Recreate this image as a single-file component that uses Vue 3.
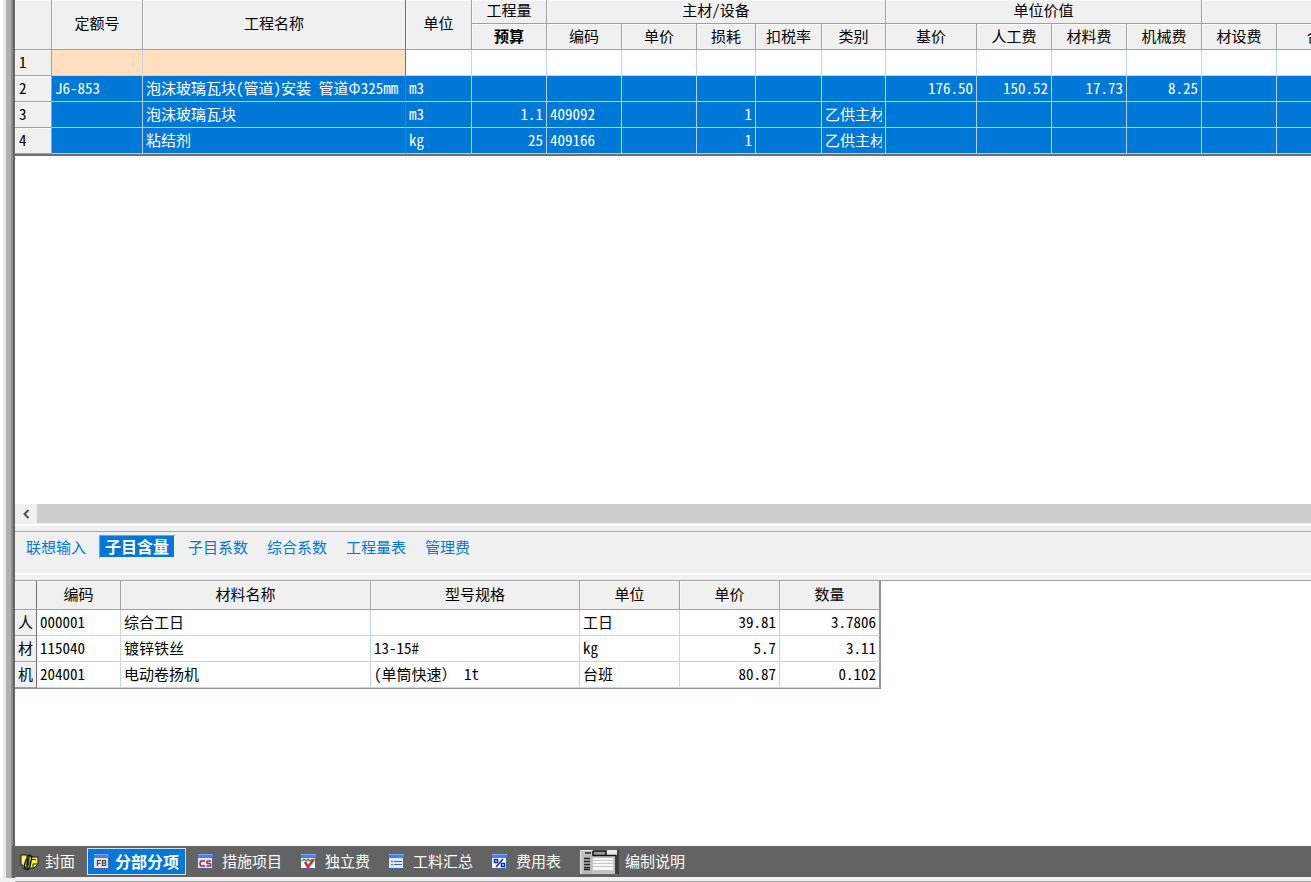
<script setup>
import { ref } from 'vue'

const columns = [
  { key: 'no', width: 37 },
  { key: 'quota', width: 91 },
  { key: 'name', width: 263 },
  { key: 'unit', width: 66 },
  { key: 'budget', width: 75, num: true },
  { key: 'code', width: 75 },
  { key: 'price', width: 75, num: true },
  { key: 'loss', width: 59, num: true },
  { key: 'tax', width: 66, num: true },
  { key: 'kind', width: 64 },
  { key: 'base', width: 91, num: true },
  { key: 'labor', width: 75, num: true },
  { key: 'material', width: 75, num: true },
  { key: 'machine', width: 75, num: true },
  { key: 'equipment', width: 75, num: true },
  { key: 'total', width: 90, num: true },
]
const subHeads = ['编码', '单价', '损耗', '扣税率', '类别', '基价', '人工费', '材料费', '机械费', '材设费', '合价']

const rows = [
  { no: '1' },
  { no: '2', quota: 'J6-853', name: '泡沫玻璃瓦块(管道)安装 管道Φ325mm', unit: 'm3', base: '176.50', labor: '150.52', material: '17.73', machine: '8.25' },
  { no: '3', name: '泡沫玻璃瓦块', unit: 'm3', budget: '1.1', code: '409092', loss: '1', kind: '乙供主材' },
  { no: '4', name: '粘结剂', unit: 'kg', budget: '25', code: '409166', loss: '1', kind: '乙供主材' },
]

const detailColumns = [
  { key: 'mark', title: '', width: 22 },
  { key: 'code', title: '编码', width: 84 },
  { key: 'name', title: '材料名称', width: 250 },
  { key: 'spec', title: '型号规格', width: 209 },
  { key: 'unit', title: '单位', width: 100 },
  { key: 'price', title: '单价', width: 100, num: true },
  { key: 'amount', title: '数量', width: 101, num: true },
]
const details = [
  { mark: '人', code: '000001', name: '综合工日', spec: '', unit: '工日', price: '39.81', amount: '3.7806' },
  { mark: '材', code: '115040', name: '镀锌铁丝', spec: '13-15#', unit: 'kg', price: '5.7', amount: '3.11' },
  { mark: '机', code: '204001', name: '电动卷扬机', spec: '(单筒快速） 1t', unit: '台班', price: '80.87', amount: '0.102' },
]

const tabs = ['联想输入', '子目含量', '子目系数', '综合系数', '工程量表', '管理费']
const activeTab = ref('子目含量')

const pages = [
  { name: '封面', icon: 'clip' },
  { name: '分部分项', icon: 'fb' },
  { name: '措施项目', icon: 'cs' },
  { name: '独立费', icon: 'check' },
  { name: '工料汇总', icon: 'list' },
  { name: '费用表', icon: 'percent' },
  { name: '编制说明', icon: 'book' },
]
const activePage = ref('分部分项')

// Full-width characters keep their own width, the Latin ones take half of it.
const runs = (text) =>
  ((text || '').match(/[\x20-\x7e]+|[^\x20-\x7e]+/g) || []).map((t) => ({ t, full: !/^[\x20-\x7e]/.test(t) }))
</script>

<template>
  <div class="app">
    <div class="edge"></div>
    <main class="content">
      <section class="upper">
        <table class="grid main-grid">
          <colgroup>
            <col v-for="c in columns" :key="c.key" :style="{ width: c.width + 'px' }" />
          </colgroup>
          <thead>
            <tr class="group-row">
              <th rowspan="2"></th>
              <th rowspan="2">定额号</th>
              <th rowspan="2" class="fixed-end">工程名称</th>
              <th rowspan="2">单位</th>
              <th>工程量</th>
              <th colspan="5">主材/设备</th>
              <th colspan="4">单位价值</th>
              <th colspan="2"></th>
            </tr>
            <tr>
              <th class="strong">预算</th>
              <th v-for="h in subHeads" :key="h">{{ h }}</th>
            </tr>
          </thead>
          <tbody>
            <tr v-for="(r, i) in rows" :key="r.no" :class="{ selected: i > 0 }">
              <template v-for="c in columns" :key="c.key">
                <th v-if="c.key === 'no'" scope="row" class="row-no">{{ r.no }}</th>
                <td v-else :class="{ num: c.num, 'fixed-end': c.key === 'name', peach: i === 0 && (c.key === 'quota' || c.key === 'name') }">
                  <div class="cell"><span v-for="(s, n) in runs(r[c.key])" :key="n" :class="{ full: s.full }">{{ s.t }}</span></div>
                </td>
              </template>
            </tr>
          </tbody>
        </table>
      </section>

      <div class="scrollbar">
        <button type="button" aria-label="向左滚动">
          <svg width="8" height="10" viewBox="0 0 8 10"><path d="M6.500 1 2.500 5l4 4" fill="none" stroke="#505050" stroke-width="2" /></svg>
        </button>
        <div class="thumb"></div>
      </div>

      <nav class="tabs">
        <button v-for="t in tabs" :key="t" type="button" :class="{ active: t === activeTab }" @click="activeTab = t">{{ t }}</button>
      </nav>

      <section class="lower">
        <table class="grid detail-grid">
          <colgroup>
            <col v-for="c in detailColumns" :key="c.key" :style="{ width: c.width + 'px' }" />
          </colgroup>
          <thead>
            <tr>
              <th v-for="c in detailColumns" :key="c.key" :class="{ 'fixed-end': c.key === 'mark' }">{{ c.title }}</th>
            </tr>
          </thead>
          <tbody>
            <tr v-for="r in details" :key="r.code">
              <template v-for="c in detailColumns" :key="c.key">
                <th v-if="c.key === 'mark'" scope="row" class="fixed-end">{{ r.mark }}</th>
                <td v-else :class="{ num: c.num }">
                  <div class="cell"><span v-for="(s, n) in runs(r[c.key])" :key="n" :class="{ full: s.full }">{{ s.t }}</span></div>
                </td>
              </template>
            </tr>
          </tbody>
        </table>
      </section>

      <nav class="pages">
        <button v-for="p in pages" :key="p.name" type="button" :class="[p.icon, { active: p.name === activePage }]" @click="activePage = p.name">
          <svg v-if="p.icon === 'clip'" width="19" height="18" viewBox="0 0 19 18">
            <path d="M1 2h6v11H6v2H3v-3H1z" fill="#f4f03c" stroke="#222" />
            <path d="M9 4h9v7l-4 4H7l2-4z" fill="#f4f03c" stroke="#222" />
            <path d="M7.500 4q1-2.500 3-1.500t1 3L10 13q-1 4-3.500 3.500T4.500 12L6 7q1.500-2 2 0L7 12" fill="none" stroke="#111" stroke-width="1.300" />
            <path d="M13 15v-4h5M12 6.500h4" fill="none" stroke="#222" />
            <path d="M3 4v6M13 8.500h3" stroke="#fffde0" />
          </svg>
          <svg v-else-if="p.icon === 'book'" width="39" height="25" viewBox="0 0 39 25">
            <path d="M0 1h39v24H0z" fill="#c4c4c4" />
            <path d="M.5 25V1.500H39" fill="none" stroke="#e4e4e4" />
            <path d="M3 6h9v19H3z" fill="#b8b8b8" />
            <path d="M5 4h6M4 9.500h6M4 12.500h6M4 15.500h6M4 18.500h6M4 20.500h6" stroke="#222" stroke-width="1.300" />
            <path d="M13 2h13v4H13z" fill="#999" />
            <path d="M26 1h11v5H26z" fill="#e7e7e7" />
            <path d="M13 2v4.500h23V25M13 2h13v4" fill="none" stroke="#111" stroke-width="1.500" />
            <path d="M38 1v24" stroke="#111" stroke-width="1.500" />
            <path d="M13 9h20v12H13z" fill="#f8f8f8" />
            <path d="M13 11.500h20M13 14.500h20M13 17.500h20" stroke="#c8c8c8" />
          </svg>
          <svg v-else width="15" height="15" viewBox="0 0 15 15">
            <path d="M0 0h15v15H0z" fill="#dce7fa" />
            <path d="M0 0h15v4H0z" fill="#4f7ee0" />
            <path d="M0 0h15v1H0z" fill="#7ba4f3" />
            <path d="M14.500 3v11.500H0" fill="none" stroke="#4563ad" />
            <template v-if="p.icon === 'fb'">
              <path d="M1 4h13v10H1z" fill="#e1e1dc" />
              <path d="M3.500 12V6.500H7M3.500 9.500h3M8.500 6.500v5h2.500q1.500-1 0-2.500H8.500 11q1.500-1.500 0-2.500z" fill="none" stroke="#444" stroke-width="1.200" />
            </template>
            <path v-else-if="p.icon === 'cs'" d="M7 7H3.500q-1.500 0-1.500 2.500t1.500 2.500H7M13 7H9.500q-1.500 1 0 2.500H12q1.500 1 0 2.500H8.500" fill="none" stroke="#b5222d" stroke-width="1.500" />
            <template v-else-if="p.icon === 'check'">
              <path d="M1 4h13v10H1z" fill="#fff" />
              <path d="M1 7l2-2 2 2 2-2 2 2 2-2" fill="none" stroke="#279b61" stroke-width="1.500" />
              <path d="M4 8l3 5 6-8" fill="none" stroke="#d52c2c" stroke-width="2.500" />
            </template>
            <template v-else-if="p.icon === 'list'">
              <path d="M5 7.500h8M5 10.500h8" stroke="#596272" />
              <path d="M2 7.500h2" stroke="#d03232" />
              <path d="M2 10.500h2" stroke="#2b9560" />
            </template>
            <template v-else>
              <path d="M1 4h13v10H1z" fill="#fff" />
              <path d="M11 5l-7 8" stroke="#1426a8" stroke-width="1.500" />
              <path d="M2.500 5.500h3v3h-3zM9.500 9.500h3v3h-3z" fill="none" stroke="#1426a8" stroke-width="1.500" />
            </template>
          </svg>
          <span>{{ p.name }}</span>
        </button>
      </nav>
      <div class="foot"></div>
    </main>
  </div>
</template>

<style>
body {
  margin: 0;
  background: #f0f0f0;
}
</style>

<style scoped>
.app {
  display: flex;
  height: 100vh;
  min-height: 600px;
  overflow: hidden;
  font-family: "Noto Sans CJK SC", "Liberation Sans", sans-serif;
  font-size: 15px;
  font-feature-settings: "hwid";
  line-height: 20px;
  color: #000;
  background: #f0f0f0;
}
.edge {
  flex: none;
  width: 15px;
  margin-bottom: 4px;
  background: linear-gradient(to right, #fff 3px, #ececec 3px 6px, #b0b0b0 6px 11px, #8c8c8c 11px 13px, #636363 13px);
}
.content {
  flex: 1;
  min-width: 0;
  display: flex;
  flex-direction: column;
}
button {
  font: inherit;
  font-feature-settings: inherit;
  border: 0;
  padding: 0;
  margin: 0;
  background: none;
  cursor: pointer;
}
.upper {
  flex: 504 1 0;
  min-height: 0;
  overflow: hidden;
  background: #fff;
}
.lower {
  flex: 265 1 0;
  min-height: 0;
  overflow: hidden;
  background: #fff;
}
.grid {
  table-layout: fixed;
  width: 1px;
  border-collapse: separate;
  border-spacing: 0;
}
th,
td {
  box-sizing: border-box;
  height: 26px;
  padding: 0 3px 1px;
  border-right: 1px solid #c5d5e5;
  border-bottom: 1px solid #c5d5e5;
  white-space: nowrap;
  overflow: hidden;
}
th {
  padding: 0 0 1px;
  font-weight: 400;
  text-align: center;
  background: #f0f0f0;
  border-color: #a0a0a0;
  box-shadow: inset 1px 1px #fafafa;
}
thead th {
  padding-bottom: 2px;
}
.group-row th {
  height: 24px;
  padding-bottom: 3px;
}
.strong {
  font-weight: 700;
}
.main-grid {
  border-bottom: 2px solid #707070;
}
.cell {
  overflow: hidden;
  height: 20px;
  white-space: pre;
}
.full {
  font-feature-settings: normal;
}
.row-no {
  padding-left: 4px;
  text-align: left;
}
.num {
  text-align: right;
}
.peach {
  background: #ffdfc0;
}
.selected td {
  color: #fff;
  background: #0078d7;
  border-color: #b7cfe7;
}
.main-grid .fixed-end,
.detail-grid .fixed-end {
  border-right-color: #707070;
}
.scrollbar {
  flex: none;
  display: flex;
  height: 20px;
  background: #f0f0f0;
}
.scrollbar button {
  width: 22px;
  display: flex;
  align-items: center;
  justify-content: center;
}
.thumb {
  flex: 1;
  margin-bottom: 1px;
  background: #cdcdcd;
}
.tabs {
  flex: none;
  box-sizing: border-box;
  display: flex;
  align-items: flex-start;
  gap: 7px;
  height: 57px;
  padding: 11px 5px 0;
  border-bottom: 1px solid #a0a0a0;
  background: linear-gradient(#fff 2px, #f0f0f0 2px 7px, #a8a8a8 7px 8px, #f0f0f0 8px 49px, #fff 49px 51px, #f0f0f0 51px);
}
.tabs button {
  height: 23px;
  padding: 0 6px;
  line-height: 23px;
  color: #0078d7;
}
.tabs .active {
  color: #fff;
  font-size: 16px;
  font-weight: 700;
  background: #0078d7;
  box-shadow: inset 1px 1px #9a9a9a, inset -1px -1px #fff;
}
.detail-grid {
  border-bottom: 1px solid #8c939b;
}
.detail-grid thead th {
  height: 29px;
}
.detail-grid tr > :last-child {
  border-right: 2px solid #8c939b;
}
.pages {
  flex: none;
  display: flex;
  align-items: center;
  gap: 5px;
  height: 31px;
  margin-left: -3px;
  padding-left: 1px;
  background: #636363;
}
.pages button {
  box-sizing: border-box;
  display: flex;
  align-items: center;
  gap: 9px;
  height: 27px;
  padding: 0 7px;
  color: #fff;
}
.pages span {
  padding-bottom: 2px;
}
.pages .clip,
.pages .fb,
.pages .book {
  gap: 6px;
}
.pages .active {
  font-size: 16px;
  font-weight: 700;
  background: #0078d7;
  box-shadow: inset 0 0 0 1px #cfe3f5;
}
.foot {
  flex: none;
  height: 4px;
  border-bottom: 1px solid #a0a0a0;
  background: #f0f0f0;
}
</style>
